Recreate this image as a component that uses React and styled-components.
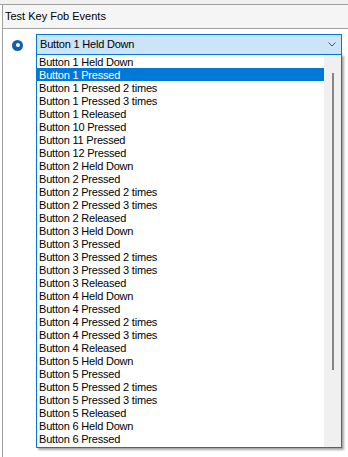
import React from "react";
import styled, { createGlobalStyle } from "styled-components";

const Global = createGlobalStyle`
  html, body { margin: 0; padding: 0; background: #ffffff; }
  body { font-family: "Liberation Sans", Arial, sans-serif; font-size: 11px; color: #000; }
`;

const Page = styled.div`
  width: 348px;
  height: 457px;
  overflow: hidden;
  display: flex;
  flex-direction: column;
  background: #ffffff;
`;

const TopBand = styled.div`
  height: 4px;
  flex: none;
  background: #f0f0f0;
  border-bottom: 1px solid #a0a0a0;
`;

const Header = styled.div`
  flex: none;
  height: 23px;
  line-height: 23px;
  margin-left: 2px;
  padding-left: 2px;
  border-left: 1px solid #a0a0a0;
  border-bottom: 1px solid #a0a0a0;
  background: #f5f5f5;
  font-size: 11px;
  white-space: nowrap;
`;

const Body = styled.div`
  flex: 1;
  margin-left: 2px;
  border-left: 1px solid #a0a0a0;
  padding: 5px 0 0 9px;
`;

const Row = styled.div`
  display: flex;
  align-items: center;
  gap: 13px;
`;

const Radio = styled.span`
  flex: none;
  width: 11px;
  height: 11px;
  border-radius: 50%;
  background: #0f5fb0;
  display: flex;
  align-items: center;
  justify-content: center;
  margin-top: 1px;
  &::after {
    content: "";
    width: 4px;
    height: 4px;
    border-radius: 50%;
    background: #ffffff;
  }
`;

const Combo = styled.div`
  position: relative;
  width: 306px;
  box-sizing: border-box;
  height: 21px;
  border: 1px solid #0078d7;
  background: #cce4f7;
  display: flex;
  align-items: center;
`;

const ComboText = styled.span`
  flex: 1;
  padding-left: 3px;
  line-height: 19px;
  letter-spacing: -0.2px;
  white-space: nowrap;
`;

const Chevron = styled.svg`
  flex: none;
  width: 8px;
  height: 5px;
  margin-right: 5px;
`;

const DropList = styled.div`
  position: absolute;
  left: -1px;
  top: 19px;
  width: 306px;
  box-sizing: border-box;
  border: 1px solid #0078d7;
  background: #ffffff;
  display: flex;
  box-shadow: 2px 2px 2px rgba(0, 0, 0, 0.35);
  z-index: 10;
`;

const Items = styled.div`
  flex: 1;
  display: flex;
  flex-direction: column;
  padding-bottom: 2px;
`;

const Item = styled.div`
  height: 13px;
  line-height: 15px;
  padding-left: 2px;
  letter-spacing: -0.2px;
  white-space: nowrap;
  overflow: hidden;
  background: ${(p) => (p.$selected ? "#0078d7" : "transparent")};
  color: ${(p) => (p.$selected ? "#ffffff" : "#000000")};
`;

const ScrollTrack = styled.div`
  flex: none;
  width: 17px;
  background: #f0f0f0;
  display: flex;
  justify-content: center;
  padding-top: 18px;
  box-sizing: border-box;
`;

const Thumb = styled.div`
  width: 2px;
  height: 297px;
  background: #858585;
`;

const items = [
  "Button 1 Held Down",
  "Button 1 Pressed",
  "Button 1 Pressed 2 times",
  "Button 1 Pressed 3 times",
  "Button 1 Released",
  "Button 10 Pressed",
  "Button 11 Pressed",
  "Button 12 Pressed",
  "Button 2 Held Down",
  "Button 2 Pressed",
  "Button 2 Pressed 2 times",
  "Button 2 Pressed 3 times",
  "Button 2 Released",
  "Button 3 Held Down",
  "Button 3 Pressed",
  "Button 3 Pressed 2 times",
  "Button 3 Pressed 3 times",
  "Button 3 Released",
  "Button 4 Held Down",
  "Button 4 Pressed",
  "Button 4 Pressed 2 times",
  "Button 4 Pressed 3 times",
  "Button 4 Released",
  "Button 5 Held Down",
  "Button 5 Pressed",
  "Button 5 Pressed 2 times",
  "Button 5 Pressed 3 times",
  "Button 5 Released",
  "Button 6 Held Down",
  "Button 6 Pressed",
];

export default function App() {
  return (
    <Page>
      <Global />
      <TopBand />
      <Header>Test Key Fob Events</Header>
      <Body>
        <Row>
          <Radio />
          <Combo>
            <ComboText>Button 1 Held Down</ComboText>
            <Chevron viewBox="0 0 8 5">
              <path d="M0.5 0.5 L4 4 L7.5 0.5" fill="none" stroke="#555" strokeWidth="1" />
            </Chevron>
            <DropList>
              <Items>
                {items.map((t, i) => (
                  <Item key={t} $selected={i === 1}>
                    {t}
                  </Item>
                ))}
              </Items>
              <ScrollTrack>
                <Thumb />
              </ScrollTrack>
            </DropList>
          </Combo>
        </Row>
      </Body>
    </Page>
  );
}
